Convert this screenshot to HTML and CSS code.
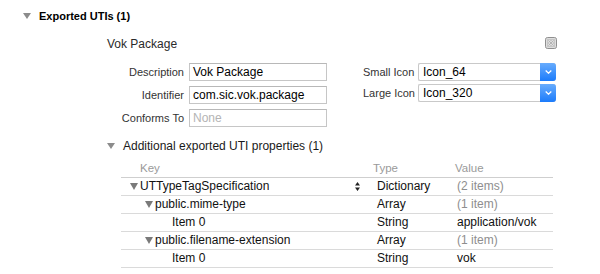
FILE: index.html
```html
<!DOCTYPE html>
<html>
<head>
<meta charset="utf-8">
<link rel="stylesheet" href="styles.css">
</head>
<body>
<div class="page">
  <div class="section-head">
    <svg class="tri" width="8" height="6" viewBox="0 0 8 6"><path d="M0 0H8L4 6Z" fill="#8c8c8c"/></svg>
    <span class="section-title">Exported UTIs (1)</span>
  </div>

  <div class="item-head">
    <span class="item-title">Vok Package</span>
    <svg class="close" width="12" height="12" viewBox="0 0 12 12">
      <rect x="0.5" y="0.5" width="11" height="11" rx="2" fill="#cfcfcf" stroke="#8f8f8f"/>
      <rect x="1.5" y="1.5" width="9" height="9" rx="1" fill="#c6c6c6" stroke="#dedede"/>
      <path d="M3.5 3.5L8.5 8.5M8.5 3.5L3.5 8.5" stroke="#efefef" stroke-width="1.6"/>
      <path d="M3.5 3.5L8.5 8.5M8.5 3.5L3.5 8.5" stroke="#9a9a9a" stroke-width="0.7"/>
    </svg>
  </div>

  <div class="form">
    <div class="form-left">
      <label class="lbl">Description</label>
      <div class="field">Vok Package</div>
      <label class="lbl">Identifier</label>
      <div class="field">com.sic.vok.package</div>
      <label class="lbl">Conforms To</label>
      <div class="field placeholder">None</div>
    </div>
    <div class="form-right">
      <label class="lbl left">Small Icon</label>
      <div class="select"><span class="select-text">Icon_64</span><span class="select-btn"><svg width="7" height="4" viewBox="0 0 7 4"><path d="M0.7 0.6L3.5 3.2L6.3 0.6" fill="none" stroke="#fff" stroke-width="1.3"/></svg></span></div>
      <label class="lbl left">Large Icon</label>
      <div class="select"><span class="select-text">Icon_320</span><span class="select-btn"><svg width="7" height="4" viewBox="0 0 7 4"><path d="M0.7 0.6L3.5 3.2L6.3 0.6" fill="none" stroke="#fff" stroke-width="1.3"/></svg></span></div>
    </div>
  </div>

  <div class="sub-head">
    <svg class="tri" width="8" height="6" viewBox="0 0 8 6"><path d="M0 0H8L4 6Z" fill="#8c8c8c"/></svg>
    <span class="sub-title">Additional exported UTI properties (1)</span>
  </div>

  <div class="table">
    <div class="row head">
      <div class="c-key hk">Key</div>
      <div class="c-type">Type</div>
      <div class="c-val">Value</div>
    </div>
    <div class="row">
      <div class="c-key lvl0">
        <span class="k"><svg class="rtri" width="8" height="7" viewBox="0 0 8 7"><path d="M0 0H8L4 7Z" fill="#7a7a7a"/></svg>UTTypeTagSpecification</span>
        <svg class="stepper" width="5" height="9" viewBox="0 0 5 9"><path d="M0 3.5H5L2.5 0Z M0 5.5H5L2.5 9Z" fill="#222"/></svg>
      </div>
      <div class="c-type t">Dictionary</div>
      <div class="c-val v gray">(2 items)</div>
    </div>
    <div class="row">
      <div class="c-key lvl1"><span class="k"><svg class="rtri" width="8" height="7" viewBox="0 0 8 7"><path d="M0 0H8L4 7Z" fill="#7a7a7a"/></svg>public.mime-type</span></div>
      <div class="c-type t">Array</div>
      <div class="c-val v gray">(1 item)</div>
    </div>
    <div class="row">
      <div class="c-key lvl2"><span class="k">Item 0</span></div>
      <div class="c-type t">String</div>
      <div class="c-val v">application/vok</div>
    </div>
    <div class="row">
      <div class="c-key lvl1"><span class="k"><svg class="rtri" width="8" height="7" viewBox="0 0 8 7"><path d="M0 0H8L4 7Z" fill="#7a7a7a"/></svg>public.filename-extension</span></div>
      <div class="c-type t">Array</div>
      <div class="c-val v gray">(1 item)</div>
    </div>
    <div class="row">
      <div class="c-key lvl2"><span class="k">Item 0</span></div>
      <div class="c-type t">String</div>
      <div class="c-val v">vok</div>
    </div>
  </div>
</div>
</body>
</html>
```

FILE: styles.css
```css
html, body {
  margin: 0;
  padding: 0;
  background: #fff;
}
.page {
  width: 600px;
  height: 274px;
  overflow: hidden;
  font-family: "Liberation Sans", Arial, sans-serif;
  color: #1a1a1a;
}
.section-head {
  display: flex;
  align-items: center;
  height: 12px;
  margin-top: 10px;
  padding-left: 23px;
}
.section-head .tri { margin-right: 8px; }
.section-title {
  font-size: 11px;
  font-weight: bold;
  color: #000;
  line-height: 12px;
}
.item-head {
  display: flex;
  align-items: center;
  justify-content: space-between;
  height: 14px;
  margin-top: 15px;
  padding-left: 107px;
  padding-right: 43px;
}
.item-title {
  font-size: 12px;
  color: #2a2a2a;
  line-height: 14px;
}
.close { display: block; margin-top: -2px; }

.form {
  display: flex;
  margin-top: 12px;
  align-items: flex-start;
}
.form-left {
  display: grid;
  grid-template-columns: 84px 138px;
  column-gap: 5px;
  row-gap: 5px;
  margin-left: 100px;
}
.form-right {
  display: grid;
  grid-template-columns: 55px 138px;
  row-gap: 3px;
  margin-left: 36px;
}
.lbl {
  font-size: 11px;
  color: #333;
  text-align: right;
  line-height: 18px;
  white-space: nowrap;
}
.lbl.left { text-align: left; }
.field {
  box-sizing: border-box;
  height: 18px;
  border: 1px solid #c6c6c6;
  border-top-color: #b8b8b8;
  font-size: 12px;
  line-height: 16px;
  padding-left: 3px;
  color: #000;
  background: #fff;
}
.field.placeholder { color: #b4b4b4; }
.select {
  box-sizing: border-box;
  height: 18px;
  display: flex;
  border: 1px solid #c9c9c9;
  border-right: none;
  border-radius: 2px 3px 3px 2px;
  background: #fff;
}
.select-text {
  flex: 1;
  font-size: 12px;
  line-height: 16px;
  padding-left: 4px;
  color: #000;
}
.select-btn {
  width: 16px;
  margin: -1px 0;
  display: flex;
  align-items: center;
  justify-content: center;
  background: linear-gradient(#68acfd, #1b7bfb);
  border-radius: 0 3px 3px 0;
}
.select-btn svg { display: block; }

.sub-head {
  display: flex;
  align-items: center;
  height: 12px;
  margin-top: 13px;
  padding-left: 107px;
}
.sub-head .tri { margin-right: 8px; }
.sub-title {
  font-size: 12px;
  color: #1a1a1a;
  line-height: 12px;
}

.table {
  margin-left: 121px;
  width: 432px;
  margin-top: 8px;
}
.row {
  display: grid;
  grid-template-columns: 252px 82px 98px;
  height: 17px;
  border-bottom: 1px solid #dadada;
  align-items: center;
  font-size: 12px;
  line-height: 17px;
  white-space: nowrap;
}
.row.head {
  border-bottom-color: #cfcfcf;
  font-size: 11.5px;
  color: #9a9a9a;
}
.hk { padding-left: 19px; }
.c-key {
  display: flex;
  align-items: center;
  justify-content: space-between;
}
.k { display: flex; align-items: center; color: #111; }
.rtri { margin-right: 2px; }
.lvl0 { padding-left: 9px; }
.lvl1 { padding-left: 24px; }
.lvl2 { padding-left: 51px; }
.stepper { margin-right: 13px; }
.t { padding-left: 4px; color: #111; }
.v { padding-left: 2px; color: #111; }
.v.gray { color: #8e8e8e; }
```
